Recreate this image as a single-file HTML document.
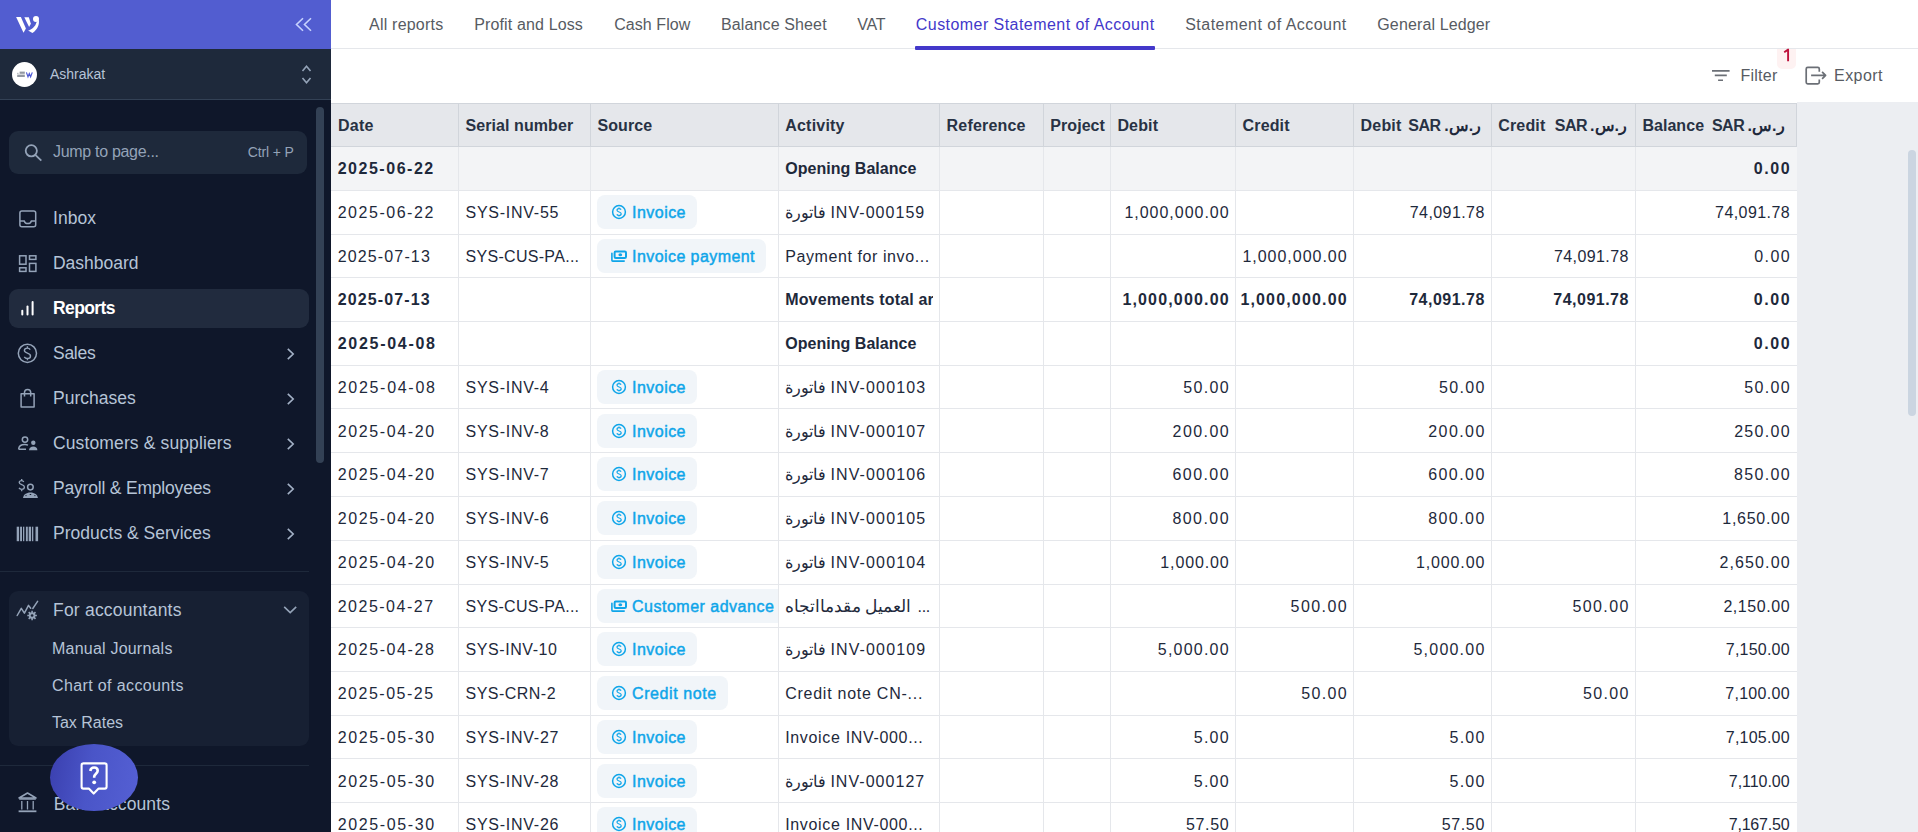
<!DOCTYPE html>
<html><head><meta charset="utf-8"><title>Customer Statement of Account</title>
<style>
html,body{margin:0;padding:0;width:1918px;height:832px;overflow:hidden;background:#fff}
body{position:relative;font-family:"Liberation Sans",sans-serif}
.b{position:absolute;box-sizing:border-box}
.t{position:absolute;white-space:pre;font-family:"Liberation Sans",sans-serif}
.clip{position:absolute;overflow:hidden}
</style></head><body>
<div class="b" style="left:0px;top:0px;width:331px;height:832px;background:#0f172a"></div><div class="b" style="left:0px;top:0px;width:331px;height:49px;background:#525dd0"></div><div class="b" style="left:0px;top:49px;width:331px;height:50px;background:#1e293b"></div><div class="b" style="left:0px;top:99px;width:331px;height:1px;background:#334155"></div><svg class="b" style="left:10px;top:10px;" width="36" height="30" viewBox="0 0 36 30"><g fill="#fff"><path d="M6.1 7 L10.9 7 L15.9 18.4 L13.5 22.8 Z"/><path d="M14.3 7.2 L18.8 7.2 L20.9 13.8 L19.1 17 Z"/><circle cx="26" cy="8.9" r="3"/><path d="M28.8 9.8 C29.6 14.2, 27.8 19.6, 22.4 23.1 L18.1 20.6 C21.6 19.4, 25.4 16.6, 26.4 12.4 Z"/></g></svg><svg class="b" style="left:290px;top:12px;" width="28" height="26" viewBox="0 0 28 26"><path d="M13 6.2 L6.5 12.5 L13 18.8 M21 6.2 L14.5 12.5 L21 18.8" fill="none" stroke="#c7d2fe" stroke-width="1.6"/></svg><div class="b" style="left:12px;top:62px;width:25px;height:25px;border-radius:50%;background:#fff"></div><svg class="b" style="left:12px;top:62px;" width="25" height="25" viewBox="0 0 25 25"><g fill="#4b5563" opacity="0.6"><rect x="7.6" y="9.6" width="5.2" height="2.2"/><rect x="5" y="10.9" width="1.6" height="0.7"/><rect x="5.2" y="12.6" width="7.6" height="2.4"/></g><path d="M14.4 10.4 L16 14.8 L17.3 11.6 L18.6 14.8 L20.3 10.4" fill="none" stroke="#4f5bd5" stroke-width="1.2"/></svg><div class="t" style="left:50px;top:65.15px;font-size:14px;line-height:18px;color:#b6c4d7;font-weight:400;letter-spacing:-0.019px;">Ashrakat</div><svg class="b" style="left:298px;top:62px;" width="18" height="26" viewBox="0 0 18 26"><path d="M4.5 9 L8.5 4.2 L12.5 9 M4.5 16 L8.5 20.8 L12.5 16" fill="none" stroke="#94a3b8" stroke-width="1.6"/></svg><div class="b" style="left:316px;top:107px;width:8px;height:356px;background:#334155;border-radius:4px"></div><div class="b" style="left:9px;top:131px;width:298px;height:43px;background:#1e293b;border-radius:9px"></div><svg class="b" style="left:20px;top:140px;" width="26" height="26" viewBox="0 0 26 26"><circle cx="11.3" cy="10.8" r="5.6" fill="none" stroke="#94a3b8" stroke-width="1.8"/><path d="M15.3 14.8 L21.3 20.6" stroke="#94a3b8" stroke-width="1.8"/></svg><div class="t" style="left:53px;top:141.46px;font-size:16px;line-height:21px;color:#94a3b8;font-weight:400;letter-spacing:-0.306px;">Jump to page...</div><div class="t" style="left:247.7px;top:142.95px;font-size:14px;line-height:18px;color:#94a3b8;font-weight:400;letter-spacing:-0.122px;">Ctrl + P</div><div class="b" style="left:9px;top:289px;width:300px;height:39px;background:#212b3e;border-radius:9px"></div><div class="t" style="left:53px;top:207.04px;font-size:17.5px;line-height:23px;color:#b6c4d7;font-weight:400;letter-spacing:0.017px;">Inbox</div><div class="t" style="left:53px;top:252.04px;font-size:17.5px;line-height:23px;color:#b6c4d7;font-weight:400;letter-spacing:-0.025px;">Dashboard</div><div class="t" style="left:53px;top:297.04px;font-size:17.5px;line-height:23px;color:#ffffff;font-weight:700;letter-spacing:-0.604px;">Reports</div><div class="t" style="left:53px;top:342.04px;font-size:17.5px;line-height:23px;color:#b6c4d7;font-weight:400;letter-spacing:-0.276px;">Sales</div><svg class="b" style="left:281px;top:345.7px;" width="20" height="16" viewBox="0 0 20 16"><path d="M6.8 2.8 L12.2 8 L6.8 13.2" fill="none" stroke="#a3b1c6" stroke-width="1.6"/></svg><div class="t" style="left:53px;top:387.24px;font-size:17.5px;line-height:23px;color:#b6c4d7;font-weight:400;letter-spacing:0.012px;">Purchases</div><svg class="b" style="left:281px;top:390.9px;" width="20" height="16" viewBox="0 0 20 16"><path d="M6.8 2.8 L12.2 8 L6.8 13.2" fill="none" stroke="#a3b1c6" stroke-width="1.6"/></svg><div class="t" style="left:53px;top:432.24px;font-size:17.5px;line-height:23px;color:#b6c4d7;font-weight:400;letter-spacing:0.126px;">Customers &amp; suppliers</div><svg class="b" style="left:281px;top:435.9px;" width="20" height="16" viewBox="0 0 20 16"><path d="M6.8 2.8 L12.2 8 L6.8 13.2" fill="none" stroke="#a3b1c6" stroke-width="1.6"/></svg><div class="t" style="left:53px;top:477.24px;font-size:17.5px;line-height:23px;color:#b6c4d7;font-weight:400;letter-spacing:-0.193px;">Payroll &amp; Employees</div><svg class="b" style="left:281px;top:480.9px;" width="20" height="16" viewBox="0 0 20 16"><path d="M6.8 2.8 L12.2 8 L6.8 13.2" fill="none" stroke="#a3b1c6" stroke-width="1.6"/></svg><div class="t" style="left:53px;top:522.24px;font-size:17.5px;line-height:23px;color:#b6c4d7;font-weight:400;letter-spacing:0.013px;">Products &amp; Services</div><svg class="b" style="left:281px;top:525.9px;" width="20" height="16" viewBox="0 0 20 16"><path d="M6.8 2.8 L12.2 8 L6.8 13.2" fill="none" stroke="#a3b1c6" stroke-width="1.6"/></svg><svg class="b" style="left:14px;top:205px;" width="28" height="28" viewBox="0 0 28 28"><rect x="5.9" y="5.9" width="15.8" height="15.8" rx="2" fill="none" stroke="#94a3b8" stroke-width="1.5"/><path d="M5.9 15.9 H10.2 C10.8 17.6, 12 18.6, 13.8 18.6 C15.6 18.6, 16.8 17.6, 17.4 15.9 H21.7" fill="none" stroke="#94a3b8" stroke-width="1.5"/></svg><svg class="b" style="left:14px;top:250px;" width="28" height="28" viewBox="0 0 28 28"><g fill="none" stroke="#94a3b8" stroke-width="1.5"><rect x="5.6" y="5.8" width="6.4" height="8.4"/><rect x="5.6" y="17.8" width="6.4" height="3.6"/><rect x="15.5" y="5.8" width="6.4" height="3.6"/><rect x="15.5" y="13.4" width="6.4" height="8"/></g></svg><svg class="b" style="left:14px;top:296px;" width="28" height="24" viewBox="0 0 28 24"><g stroke="#fff" stroke-width="2" stroke-linecap="round"><path d="M8.3 14.8 V18.6"/><path d="M13.5 10.6 V18.6"/><path d="M18.6 6 V18.6"/></g></svg><svg class="b" style="left:14px;top:340px;" width="28" height="28" viewBox="0 0 28 28"><circle cx="13.4" cy="13.3" r="9.1" fill="none" stroke="#94a3b8" stroke-width="1.5"/><path d="M16.2 9.6 C15.6 8.6, 14.6 8.1, 13.4 8.1 C11.6 8.1, 10.4 9.1, 10.4 10.6 C10.4 13.8, 16.5 12.6, 16.5 15.9 C16.5 17.5, 15.1 18.5, 13.4 18.5 C12 18.5, 10.9 17.9, 10.3 16.9 M13.4 6.3 V8.1 M13.4 18.5 V20.3" fill="none" stroke="#94a3b8" stroke-width="1.4"/></svg><svg class="b" style="left:14px;top:385px;" width="28" height="28" viewBox="0 0 28 28"><path d="M7.1 8.8 H20.1 V22.1 H7.1 Z" fill="none" stroke="#94a3b8" stroke-width="1.5" stroke-linejoin="round"/><path d="M10.5 11.5 V7.6 C10.5 5.6, 11.9 4.4, 13.6 4.4 C15.3 4.4, 16.7 5.6, 16.7 7.6 V11.5" fill="none" stroke="#94a3b8" stroke-width="1.5"/></svg><svg class="b" style="left:14px;top:432px;" width="28" height="24" viewBox="0 0 28 24"><circle cx="11" cy="7.6" r="2.7" fill="none" stroke="#94a3b8" stroke-width="1.5"/><path d="M4.6 17.3 C4.8 14.2, 7.5 12.6, 11 12.6 C12.2 12.6, 13.2 12.8, 14 13.1 M4.6 17.3 H12" fill="none" stroke="#94a3b8" stroke-width="1.5"/><circle cx="19.3" cy="10.8" r="2.2" fill="#94a3b8"/><path d="M15 18.3 C15.3 15.5, 17 14.4, 19.3 14.4 C21.6 14.4, 23.3 15.5, 23.4 18.3 Z" fill="#94a3b8"/></svg><svg class="b" style="left:14px;top:475px;" width="28" height="28" viewBox="0 0 28 28"><path d="M9.8 6.8 C9.3 6, 8.5 5.6, 7.6 5.6 C6.2 5.6, 5.2 6.4, 5.2 7.5 C5.2 10.2, 10.4 9.2, 10.4 12.1 C10.4 13.4, 9.2 14.3, 7.7 14.3 C6.5 14.3, 5.5 13.8, 5 12.9 M7.7 4 V5.6 M7.7 14.3 V16.3" fill="none" stroke="#94a3b8" stroke-width="1.3"/><circle cx="16.4" cy="12.1" r="2.8" fill="none" stroke="#94a3b8" stroke-width="1.5"/><path d="M9 23 C9.3 19.6, 12.3 17.4, 16.4 17.4 C20.5 17.4, 23.6 19.6, 23.9 23 Z" fill="#94a3b8"/><path d="M11.5 20.6 H12.5 M15.7 19.5 H17.2 M20.4 20.6 H21.4" stroke="#0f172a" stroke-width="1"/></svg><svg class="b" style="left:14px;top:522px;" width="28" height="24" viewBox="0 0 28 24"><g fill="#94a3b8"><rect x="2.7" y="4.7" width="2.4" height="14.5"/><rect x="6.1" y="4.7" width="1.9" height="14.5"/><rect x="9" y="4.7" width="1.3" height="14.5"/><rect x="11.9" y="4.7" width="1.9" height="14.5"/><rect x="14.7" y="4.7" width="2.4" height="14.5"/><rect x="18" y="4.7" width="1.3" height="14.5"/><rect x="21.5" y="4.7" width="2.6" height="14.5"/></g></svg><div class="b" style="left:0px;top:571px;width:309px;height:1px;background:#1e293b"></div><div class="b" style="left:9px;top:591px;width:300px;height:155px;background:#172033;border-radius:9px"></div><div class="t" style="left:53px;top:599.04px;font-size:17.5px;line-height:23px;color:#b6c4d7;font-weight:400;letter-spacing:0.208px;">For accountants</div><svg class="b" style="left:10px;top:590px;" width="40" height="40" viewBox="0 0 40 40"><path d="M7.2 25.5 L11.3 18.3 L14.4 23.1 L18.5 15.4 L20.7 18.3 M22.8 18.5 L27.6 11.3" fill="none" stroke="#94a3b8" stroke-width="1.5" stroke-linecap="round" stroke-linejoin="round"/><g transform="translate(22.1 25.5)"><circle r="3.3" fill="#94a3b8"/><g stroke="#94a3b8" stroke-width="1.6"><path d="M0 -4.8 V4.8 M-4.8 0 H4.8 M-3.4 -3.4 L3.4 3.4 M-3.4 3.4 L3.4 -3.4"/></g><circle r="1.3" fill="#172033"/></g></svg><svg class="b" style="left:278px;top:600px;" width="24" height="20" viewBox="0 0 24 20"><path d="M6.2 6.8 L12.2 12.6 L18.2 6.8" fill="none" stroke="#94a3b8" stroke-width="1.6"/></svg><div class="t" style="left:52px;top:638.16px;font-size:16px;line-height:21px;color:#b6c4d7;font-weight:400;letter-spacing:0.213px;">Manual Journals</div><div class="t" style="left:52px;top:675.36px;font-size:16px;line-height:21px;color:#b6c4d7;font-weight:400;letter-spacing:0.376px;">Chart of accounts</div><div class="t" style="left:52px;top:712.26px;font-size:16px;line-height:21px;color:#b6c4d7;font-weight:400;letter-spacing:-0.016px;">Tax Rates</div><div class="b" style="left:0px;top:765px;width:309px;height:1px;background:#1e293b"></div><svg class="b" style="left:14px;top:788px;" width="28" height="28" viewBox="0 0 28 28"><path d="M5 10 L13.5 5 L22 10 Z" fill="none" stroke="#94a3b8" stroke-width="1.5" stroke-linejoin="round"/><path d="M5.2 11 H21.8" stroke="#94a3b8" stroke-width="1.5"/><path d="M7.8 13 V21.4 M13.5 13 V21.4 M19.2 13 V21.4" stroke="#94a3b8" stroke-width="1.3"/><path d="M4.6 23.3 H22.4" stroke="#94a3b8" stroke-width="1.8"/></svg><div class="t" style="left:53.75px;top:792.64px;font-size:17.5px;line-height:23px;color:#b6c4d7;font-weight:400;letter-spacing:0.116px;">Bank accounts</div><div class="b" style="left:50px;top:744px;width:88px;height:67px;border-radius:50%;background:linear-gradient(100deg,#3a3fae 0%,#4a55c8 45%,#5560d4 100%)"></div><svg class="b" style="left:76px;top:758px;" width="36" height="40" viewBox="0 0 36 40"><path d="M5.6 7.2 Q5.6 5.4 7.4 5.4 H28.8 Q30.6 5.4 30.6 7.2 V28.8 Q30.6 30.6 28.8 30.6 H22.6 L17.7 35.6 L12.8 30.6 H7.4 Q5.6 30.6 5.6 28.8 Z" fill="none" stroke="#fff" stroke-width="2.1" stroke-linejoin="round"/><path d="M14.3 13 C14.6 10.7, 16.1 9.5, 18.1 9.5 C20.2 9.5, 21.7 10.9, 21.7 12.8 C21.7 15.5, 18.2 15.9, 18.2 18.8 V19.8" fill="none" stroke="#fff" stroke-width="2.6"/><circle cx="18.2" cy="24.3" r="1.9" fill="#fff"/></svg><div class="b" style="left:331px;top:0px;width:1587px;height:832px;background:#fff"></div><div class="b" style="left:331px;top:48px;width:1587px;height:1px;background:#e5e7eb"></div><div class="t" style="left:369px;top:13.76px;font-size:16px;line-height:21px;color:#575b62;font-weight:400;letter-spacing:0.215px;">All reports</div><div class="t" style="left:474.2px;top:13.76px;font-size:16px;line-height:21px;color:#575b62;font-weight:400;letter-spacing:0.138px;">Profit and Loss</div><div class="t" style="left:614.2px;top:13.76px;font-size:16px;line-height:21px;color:#575b62;font-weight:400;letter-spacing:0.069px;">Cash Flow</div><div class="t" style="left:721px;top:13.76px;font-size:16px;line-height:21px;color:#575b62;font-weight:400;letter-spacing:0.125px;">Balance Sheet</div><div class="t" style="left:857.3px;top:13.76px;font-size:16px;line-height:21px;color:#575b62;font-weight:400;letter-spacing:-0.283px;">VAT</div><div class="t" style="left:915.8px;top:13.76px;font-size:16px;line-height:21px;color:#4338ca;font-weight:400;letter-spacing:0.445px;">Customer Statement of Account</div><div class="t" style="left:1185.2px;top:13.76px;font-size:16px;line-height:21px;color:#575b62;font-weight:400;letter-spacing:0.475px;">Statement of Account</div><div class="t" style="left:1377.3px;top:13.76px;font-size:16px;line-height:21px;color:#575b62;font-weight:400;letter-spacing:0.129px;">General Ledger</div><div class="b" style="left:915px;top:46px;width:240px;height:4px;background:#4338ca;border-radius:1px"></div><svg class="b" style="left:1706px;top:62px;" width="30" height="26" viewBox="0 0 30 26"><path d="M6 8.9 H23.6 M8.8 13.4 H20.8 M12.1 18.3 H17" stroke="#6b6f76" stroke-width="1.6"/></svg><div class="t" style="left:1740.4px;top:65.06px;font-size:16px;line-height:21px;color:#575b62;font-weight:400;letter-spacing:0.273px;">Filter</div><div class="b" style="left:1777px;top:49px;width:19px;height:20px;background:#fef2f2;border-radius:0 0 5px 5px"></div><svg class="b" style="left:1780px;top:46px;" width="14" height="18" viewBox="0 0 14 18"><path d="M4.2 6.2 L8.1 3.6 V15.3" fill="none" stroke="#be123c" stroke-width="1.9" stroke-linejoin="round"/></svg><svg class="b" style="left:1800px;top:60px;" width="32" height="30" viewBox="0 0 32 30"><path d="M19.3 11.8 V8.9 Q19.3 7.4 17.8 7.4 H7.7 Q6.2 7.4 6.2 8.9 V22.3 Q6.2 23.8 7.7 23.8 H17.8 Q19.3 23.8 19.3 22.3 V19.4" fill="none" stroke="#6b6f76" stroke-width="1.7"/><path d="M11.1 15.3 H25.4 M22.1 11.8 L25.6 15.3 L22.1 18.8" fill="none" stroke="#6b6f76" stroke-width="1.7" stroke-linejoin="round"/></svg><div class="t" style="left:1834px;top:65.06px;font-size:16px;line-height:21px;color:#575b62;font-weight:400;letter-spacing:0.458px;">Export</div><div class="b" style="left:1797px;top:102px;width:121px;height:730px;background:#eceef2"></div><div class="b" style="left:1908px;top:150px;width:8px;height:266px;background:#cbd5e1;border-radius:4px"></div><div class="b" style="left:331px;top:103px;width:1466px;height:44px;background:#e5e7eb"></div><div class="b" style="left:331px;top:103px;width:1466px;height:1px;background:#d1d5db"></div><div class="b" style="left:331px;top:146px;width:1466px;height:1px;background:#d1d5db"></div><div class="b" style="left:458px;top:103px;width:1px;height:44px;background:#d1d5db"></div><div class="b" style="left:590px;top:103px;width:1px;height:44px;background:#d1d5db"></div><div class="b" style="left:778px;top:103px;width:1px;height:44px;background:#d1d5db"></div><div class="b" style="left:939px;top:103px;width:1px;height:44px;background:#d1d5db"></div><div class="b" style="left:1043px;top:103px;width:1px;height:44px;background:#d1d5db"></div><div class="b" style="left:1110px;top:103px;width:1px;height:44px;background:#d1d5db"></div><div class="b" style="left:1235px;top:103px;width:1px;height:44px;background:#d1d5db"></div><div class="b" style="left:1353px;top:103px;width:1px;height:44px;background:#d1d5db"></div><div class="b" style="left:1491px;top:103px;width:1px;height:44px;background:#d1d5db"></div><div class="b" style="left:1635px;top:103px;width:1px;height:44px;background:#d1d5db"></div><div class="b" style="left:1796px;top:103px;width:1px;height:44px;background:#d1d5db"></div><div class="b" style="left:331px;top:147px;width:1466px;height:685px;background:#fff"></div><div class="b" style="left:331px;top:147px;width:1466px;height:43px;background:#f3f4f6"></div><div class="b" style="left:331px;top:190px;width:1466px;height:1px;background:#e5e7eb"></div><div class="b" style="left:331px;top:234px;width:1466px;height:1px;background:#e5e7eb"></div><div class="b" style="left:331px;top:277px;width:1466px;height:1px;background:#e5e7eb"></div><div class="b" style="left:331px;top:321px;width:1466px;height:1px;background:#e5e7eb"></div><div class="b" style="left:331px;top:365px;width:1466px;height:1px;background:#e5e7eb"></div><div class="b" style="left:331px;top:408px;width:1466px;height:1px;background:#e5e7eb"></div><div class="b" style="left:331px;top:452px;width:1466px;height:1px;background:#e5e7eb"></div><div class="b" style="left:331px;top:496px;width:1466px;height:1px;background:#e5e7eb"></div><div class="b" style="left:331px;top:540px;width:1466px;height:1px;background:#e5e7eb"></div><div class="b" style="left:331px;top:584px;width:1466px;height:1px;background:#e5e7eb"></div><div class="b" style="left:331px;top:627px;width:1466px;height:1px;background:#e5e7eb"></div><div class="b" style="left:331px;top:671px;width:1466px;height:1px;background:#e5e7eb"></div><div class="b" style="left:331px;top:715px;width:1466px;height:1px;background:#e5e7eb"></div><div class="b" style="left:331px;top:758px;width:1466px;height:1px;background:#e5e7eb"></div><div class="b" style="left:331px;top:802px;width:1466px;height:1px;background:#e5e7eb"></div><div class="b" style="left:331px;top:846px;width:1466px;height:1px;background:#e5e7eb"></div><div class="b" style="left:458px;top:147px;width:1px;height:685px;background:#e5e7eb"></div><div class="b" style="left:590px;top:147px;width:1px;height:685px;background:#e5e7eb"></div><div class="b" style="left:778px;top:147px;width:1px;height:685px;background:#e5e7eb"></div><div class="b" style="left:939px;top:147px;width:1px;height:685px;background:#e5e7eb"></div><div class="b" style="left:1043px;top:147px;width:1px;height:685px;background:#e5e7eb"></div><div class="b" style="left:1110px;top:147px;width:1px;height:685px;background:#e5e7eb"></div><div class="b" style="left:1235px;top:147px;width:1px;height:685px;background:#e5e7eb"></div><div class="b" style="left:1353px;top:147px;width:1px;height:685px;background:#e5e7eb"></div><div class="b" style="left:1491px;top:147px;width:1px;height:685px;background:#e5e7eb"></div><div class="b" style="left:1635px;top:147px;width:1px;height:685px;background:#e5e7eb"></div><div class="t" style="left:338px;top:114.86px;font-size:16px;line-height:21px;color:#283244;font-weight:700;letter-spacing:0.254px;">Date</div><div class="t" style="left:465.5px;top:114.86px;font-size:16px;line-height:21px;color:#283244;font-weight:700;letter-spacing:0.082px;">Serial number</div><div class="t" style="left:597.5px;top:114.86px;font-size:16px;line-height:21px;color:#283244;font-weight:700;letter-spacing:0.081px;">Source</div><div class="t" style="left:785.2px;top:114.86px;font-size:16px;line-height:21px;color:#283244;font-weight:700;letter-spacing:0.219px;">Activity</div><div class="t" style="left:946.6px;top:114.86px;font-size:16px;line-height:21px;color:#283244;font-weight:700;letter-spacing:0.184px;">Reference</div><div class="t" style="left:1050.3px;top:114.86px;font-size:16px;line-height:21px;color:#283244;font-weight:700;letter-spacing:0.062px;">Project</div><div class="t" style="left:1117.4px;top:114.86px;font-size:16px;line-height:21px;color:#283244;font-weight:700;letter-spacing:0.169px;">Debit</div><div class="t" style="left:1242.6px;top:114.86px;font-size:16px;line-height:21px;color:#283244;font-weight:700;letter-spacing:0.141px;">Credit</div><div class="t" style="left:1360.6px;top:114.86px;font-size:16px;line-height:21px;color:#283244;font-weight:700;letter-spacing:0.169px;">Debit</div><div class="t" style="left:1498.3px;top:114.86px;font-size:16px;line-height:21px;color:#283244;font-weight:700;letter-spacing:0.141px;">Credit</div><div class="t" style="left:1642.4px;top:114.86px;font-size:16px;line-height:21px;color:#283244;font-weight:700;letter-spacing:0.045px;">Balance</div><div class="t" style="left:1408.2px;top:114.86px;font-size:16px;line-height:21px;color:#283244;font-weight:700;letter-spacing:-0.484px;">SAR</div><div class="t" style="right:calc(436.79999999999995px - 0.000px);top:114.86px;font-size:16px;line-height:21px;color:#1e293b;font-weight:700;letter-spacing:0.000px;direction:rtl;unicode-bidi:isolate">ر.س.</div><div class="t" style="left:1554.7px;top:114.86px;font-size:16px;line-height:21px;color:#283244;font-weight:700;letter-spacing:-0.484px;">SAR</div><div class="t" style="right:calc(291px - 0.000px);top:114.86px;font-size:16px;line-height:21px;color:#1e293b;font-weight:700;letter-spacing:0.000px;direction:rtl;unicode-bidi:isolate">ر.س.</div><div class="t" style="left:1711.9px;top:114.86px;font-size:16px;line-height:21px;color:#283244;font-weight:700;letter-spacing:-0.484px;">SAR</div><div class="t" style="right:calc(133.5px - 0.000px);top:114.86px;font-size:16px;line-height:21px;color:#1e293b;font-weight:700;letter-spacing:0.000px;direction:rtl;unicode-bidi:isolate">ر.س.</div><div class="t" style="left:337.7px;top:158.13px;font-size:16px;line-height:21px;color:#1e293b;font-weight:700;letter-spacing:1.522px;">2025-06-22</div><div class="clip" style="left:779.2px;top:146.00px;width:153.9px;height:43.75px"><div class="t" style="left:6px;top:12.13px;font-size:16px;line-height:21px;color:#1e293b;font-weight:700;letter-spacing:0.035px;">Opening Balance</div></div><div class="t" style="right:calc(128.4000000000001px - 1.584px);top:158.13px;font-size:16px;line-height:21px;color:#1e293b;font-weight:700;letter-spacing:1.584px;">0.00</div><div class="t" style="left:337.7px;top:201.88px;font-size:16px;line-height:21px;color:#1e293b;font-weight:400;letter-spacing:1.529px;">2025-06-22</div><div class="t" style="left:465.5px;top:201.88px;font-size:16px;line-height:21px;color:#1e293b;font-weight:400;letter-spacing:0.743px;">SYS-INV-55</div><div class="clip" style="left:597.1px;top:194.75px;width:181.1px;height:34px"><div class="b" style="left:0;top:0;width:100.0px;height:34px;background:#f1f5f9;border-radius:8px"></div></div><svg class="b" style="left:608.7px;top:201.825px" width="20" height="20" viewBox="0 0 20 20"><circle cx="10" cy="10" r="6.4" fill="none" stroke="#0ea5e9" stroke-width="1.5"/><path d="M12.1 7.6 C11.7 7, 11 6.6, 10 6.6 C8.8 6.6, 8 7.3, 8 8.3 C8 10.5, 12.2 9.6, 12.2 11.8 C12.2 12.9, 11.2 13.5, 10 13.5 C9 13.5, 8.2 13.1, 7.8 12.4 M10 5.4 V6.6 M10 13.5 V14.6" fill="none" stroke="#0ea5e9" stroke-width="1.2"/></svg><div class="t" style="left:632px;top:201.88px;font-size:16px;line-height:21px;color:#0ea5e9;font-weight:400;letter-spacing:0.471px;-webkit-text-stroke:0.45px #0ea5e9">Invoice</div><div class="t" style="right:calc(1092px - 0.000px);top:201.88px;font-size:16px;line-height:21px;color:#1e293b;font-weight:400;letter-spacing:0.000px;direction:rtl;unicode-bidi:isolate">فاتورة</div><div class="t" style="left:830.4px;top:201.88px;font-size:16px;line-height:21px;color:#1e293b;font-weight:400;letter-spacing:1.038px;">INV-000159</div><div class="t" style="right:calc(689.4000000000001px - 0.976px);top:201.88px;font-size:16px;line-height:21px;color:#1e293b;font-weight:400;letter-spacing:0.976px;">1,000,000.00</div><div class="t" style="right:calc(433.70000000000005px - 0.415px);top:201.88px;font-size:16px;line-height:21px;color:#1e293b;font-weight:400;letter-spacing:0.415px;">74,091.78</div><div class="t" style="right:calc(128.4000000000001px - 0.415px);top:201.88px;font-size:16px;line-height:21px;color:#1e293b;font-weight:400;letter-spacing:0.415px;">74,091.78</div><div class="t" style="left:337.7px;top:245.63px;font-size:16px;line-height:21px;color:#1e293b;font-weight:400;letter-spacing:1.142px;">2025-07-13</div><div class="t" style="left:465.5px;top:245.63px;font-size:16px;line-height:21px;color:#1e293b;font-weight:400;letter-spacing:0.302px;">SYS-CUS-PA...</div><div class="clip" style="left:597.1px;top:238.50px;width:181.1px;height:34px"><div class="b" style="left:0;top:0;width:169.0px;height:34px;background:#f1f5f9;border-radius:8px"></div></div><svg class="b" style="left:608.8px;top:245.575px" width="20" height="20" viewBox="0 0 20 20"><rect x="5.6" y="5.6" width="11.4" height="6.4" rx="1.2" fill="none" stroke="#0ea5e9" stroke-width="2"/><ellipse cx="11.3" cy="8.8" rx="1.9" ry="1.5" fill="#0ea5e9"/><path d="M2.9 7.2 V14.3 Q2.9 15.1 3.7 15.1 H15.2" fill="none" stroke="#0ea5e9" stroke-width="1.6" stroke-linecap="round"/></svg><div class="t" style="left:632px;top:245.63px;font-size:16px;line-height:21px;color:#0ea5e9;font-weight:400;letter-spacing:0.432px;-webkit-text-stroke:0.45px #0ea5e9">Invoice payment</div><div class="t" style="left:785.2px;top:245.63px;font-size:16px;line-height:21px;color:#1e293b;font-weight:400;letter-spacing:0.590px;">Payment for invo...</div><div class="t" style="right:calc(571.4000000000001px - 0.976px);top:245.63px;font-size:16px;line-height:21px;color:#1e293b;font-weight:400;letter-spacing:0.976px;">1,000,000.00</div><div class="t" style="right:calc(289.5999999999999px - 0.415px);top:245.63px;font-size:16px;line-height:21px;color:#1e293b;font-weight:400;letter-spacing:0.415px;">74,091.78</div><div class="t" style="right:calc(128.4000000000001px - 1.390px);top:245.63px;font-size:16px;line-height:21px;color:#1e293b;font-weight:400;letter-spacing:1.390px;">0.00</div><div class="t" style="left:337.7px;top:289.38px;font-size:16px;line-height:21px;color:#1e293b;font-weight:700;letter-spacing:1.132px;">2025-07-13</div><div class="clip" style="left:779.2px;top:277.25px;width:153.9px;height:43.75px"><div class="t" style="left:6px;top:12.13px;font-size:16px;line-height:21px;color:#1e293b;font-weight:700;letter-spacing:0.158px;">Movements total ar</div></div><div class="t" style="right:calc(689.4000000000001px - 1.163px);top:289.38px;font-size:16px;line-height:21px;color:#1e293b;font-weight:700;letter-spacing:1.163px;">1,000,000.00</div><div class="t" style="right:calc(571.4000000000001px - 1.163px);top:289.38px;font-size:16px;line-height:21px;color:#1e293b;font-weight:700;letter-spacing:1.163px;">1,000,000.00</div><div class="t" style="right:calc(433.70000000000005px - 0.491px);top:289.38px;font-size:16px;line-height:21px;color:#1e293b;font-weight:700;letter-spacing:0.491px;">74,091.78</div><div class="t" style="right:calc(289.5999999999999px - 0.491px);top:289.38px;font-size:16px;line-height:21px;color:#1e293b;font-weight:700;letter-spacing:0.491px;">74,091.78</div><div class="t" style="right:calc(128.4000000000001px - 1.584px);top:289.38px;font-size:16px;line-height:21px;color:#1e293b;font-weight:700;letter-spacing:1.584px;">0.00</div><div class="t" style="left:337.7px;top:333.13px;font-size:16px;line-height:21px;color:#1e293b;font-weight:700;letter-spacing:1.721px;">2025-04-08</div><div class="clip" style="left:779.2px;top:321.00px;width:153.9px;height:43.75px"><div class="t" style="left:6px;top:12.13px;font-size:16px;line-height:21px;color:#1e293b;font-weight:700;letter-spacing:0.035px;">Opening Balance</div></div><div class="t" style="right:calc(128.4000000000001px - 1.584px);top:333.13px;font-size:16px;line-height:21px;color:#1e293b;font-weight:700;letter-spacing:1.584px;">0.00</div><div class="t" style="left:337.7px;top:376.88px;font-size:16px;line-height:21px;color:#1e293b;font-weight:400;letter-spacing:1.708px;">2025-04-08</div><div class="t" style="left:465.5px;top:376.88px;font-size:16px;line-height:21px;color:#1e293b;font-weight:400;letter-spacing:0.721px;">SYS-INV-4</div><div class="clip" style="left:597.1px;top:369.75px;width:181.1px;height:34px"><div class="b" style="left:0;top:0;width:100.0px;height:34px;background:#f1f5f9;border-radius:8px"></div></div><svg class="b" style="left:608.7px;top:376.825px" width="20" height="20" viewBox="0 0 20 20"><circle cx="10" cy="10" r="6.4" fill="none" stroke="#0ea5e9" stroke-width="1.5"/><path d="M12.1 7.6 C11.7 7, 11 6.6, 10 6.6 C8.8 6.6, 8 7.3, 8 8.3 C8 10.5, 12.2 9.6, 12.2 11.8 C12.2 12.9, 11.2 13.5, 10 13.5 C9 13.5, 8.2 13.1, 7.8 12.4 M10 5.4 V6.6 M10 13.5 V14.6" fill="none" stroke="#0ea5e9" stroke-width="1.2"/></svg><div class="t" style="left:632px;top:376.88px;font-size:16px;line-height:21px;color:#0ea5e9;font-weight:400;letter-spacing:0.471px;-webkit-text-stroke:0.45px #0ea5e9">Invoice</div><div class="t" style="right:calc(1092px - 0.000px);top:376.88px;font-size:16px;line-height:21px;color:#1e293b;font-weight:400;letter-spacing:0.000px;direction:rtl;unicode-bidi:isolate">فاتورة</div><div class="t" style="left:830.4px;top:376.88px;font-size:16px;line-height:21px;color:#1e293b;font-weight:400;letter-spacing:1.143px;">INV-000103</div><div class="t" style="right:calc(689.4000000000001px - 1.336px);top:376.88px;font-size:16px;line-height:21px;color:#1e293b;font-weight:400;letter-spacing:1.336px;">50.00</div><div class="t" style="right:calc(433.70000000000005px - 1.336px);top:376.88px;font-size:16px;line-height:21px;color:#1e293b;font-weight:400;letter-spacing:1.336px;">50.00</div><div class="t" style="right:calc(128.4000000000001px - 1.336px);top:376.88px;font-size:16px;line-height:21px;color:#1e293b;font-weight:400;letter-spacing:1.336px;">50.00</div><div class="t" style="left:337.7px;top:420.63px;font-size:16px;line-height:21px;color:#1e293b;font-weight:400;letter-spacing:1.637px;">2025-04-20</div><div class="t" style="left:465.5px;top:420.63px;font-size:16px;line-height:21px;color:#1e293b;font-weight:400;letter-spacing:0.721px;">SYS-INV-8</div><div class="clip" style="left:597.1px;top:413.50px;width:181.1px;height:34px"><div class="b" style="left:0;top:0;width:100.0px;height:34px;background:#f1f5f9;border-radius:8px"></div></div><svg class="b" style="left:608.7px;top:420.575px" width="20" height="20" viewBox="0 0 20 20"><circle cx="10" cy="10" r="6.4" fill="none" stroke="#0ea5e9" stroke-width="1.5"/><path d="M12.1 7.6 C11.7 7, 11 6.6, 10 6.6 C8.8 6.6, 8 7.3, 8 8.3 C8 10.5, 12.2 9.6, 12.2 11.8 C12.2 12.9, 11.2 13.5, 10 13.5 C9 13.5, 8.2 13.1, 7.8 12.4 M10 5.4 V6.6 M10 13.5 V14.6" fill="none" stroke="#0ea5e9" stroke-width="1.2"/></svg><div class="t" style="left:632px;top:420.63px;font-size:16px;line-height:21px;color:#0ea5e9;font-weight:400;letter-spacing:0.471px;-webkit-text-stroke:0.45px #0ea5e9">Invoice</div><div class="t" style="right:calc(1092px - 0.000px);top:420.63px;font-size:16px;line-height:21px;color:#1e293b;font-weight:400;letter-spacing:0.000px;direction:rtl;unicode-bidi:isolate">فاتورة</div><div class="t" style="left:830.4px;top:420.63px;font-size:16px;line-height:21px;color:#1e293b;font-weight:400;letter-spacing:1.143px;">INV-000107</div><div class="t" style="right:calc(689.4000000000001px - 1.420px);top:420.63px;font-size:16px;line-height:21px;color:#1e293b;font-weight:400;letter-spacing:1.420px;">200.00</div><div class="t" style="right:calc(433.70000000000005px - 1.420px);top:420.63px;font-size:16px;line-height:21px;color:#1e293b;font-weight:400;letter-spacing:1.420px;">200.00</div><div class="t" style="right:calc(128.4000000000001px - 1.305px);top:420.63px;font-size:16px;line-height:21px;color:#1e293b;font-weight:400;letter-spacing:1.305px;">250.00</div><div class="t" style="left:337.7px;top:464.38px;font-size:16px;line-height:21px;color:#1e293b;font-weight:400;letter-spacing:1.637px;">2025-04-20</div><div class="t" style="left:465.5px;top:464.38px;font-size:16px;line-height:21px;color:#1e293b;font-weight:400;letter-spacing:0.721px;">SYS-INV-7</div><div class="clip" style="left:597.1px;top:457.25px;width:181.1px;height:34px"><div class="b" style="left:0;top:0;width:100.0px;height:34px;background:#f1f5f9;border-radius:8px"></div></div><svg class="b" style="left:608.7px;top:464.325px" width="20" height="20" viewBox="0 0 20 20"><circle cx="10" cy="10" r="6.4" fill="none" stroke="#0ea5e9" stroke-width="1.5"/><path d="M12.1 7.6 C11.7 7, 11 6.6, 10 6.6 C8.8 6.6, 8 7.3, 8 8.3 C8 10.5, 12.2 9.6, 12.2 11.8 C12.2 12.9, 11.2 13.5, 10 13.5 C9 13.5, 8.2 13.1, 7.8 12.4 M10 5.4 V6.6 M10 13.5 V14.6" fill="none" stroke="#0ea5e9" stroke-width="1.2"/></svg><div class="t" style="left:632px;top:464.38px;font-size:16px;line-height:21px;color:#0ea5e9;font-weight:400;letter-spacing:0.471px;-webkit-text-stroke:0.45px #0ea5e9">Invoice</div><div class="t" style="right:calc(1092px - 0.000px);top:464.38px;font-size:16px;line-height:21px;color:#1e293b;font-weight:400;letter-spacing:0.000px;direction:rtl;unicode-bidi:isolate">فاتورة</div><div class="t" style="left:830.4px;top:464.38px;font-size:16px;line-height:21px;color:#1e293b;font-weight:400;letter-spacing:1.143px;">INV-000106</div><div class="t" style="right:calc(689.4000000000001px - 1.447px);top:464.38px;font-size:16px;line-height:21px;color:#1e293b;font-weight:400;letter-spacing:1.447px;">600.00</div><div class="t" style="right:calc(433.70000000000005px - 1.447px);top:464.38px;font-size:16px;line-height:21px;color:#1e293b;font-weight:400;letter-spacing:1.447px;">600.00</div><div class="t" style="right:calc(128.4000000000001px - 1.329px);top:464.38px;font-size:16px;line-height:21px;color:#1e293b;font-weight:400;letter-spacing:1.329px;">850.00</div><div class="t" style="left:337.7px;top:508.13px;font-size:16px;line-height:21px;color:#1e293b;font-weight:400;letter-spacing:1.637px;">2025-04-20</div><div class="t" style="left:465.5px;top:508.13px;font-size:16px;line-height:21px;color:#1e293b;font-weight:400;letter-spacing:0.721px;">SYS-INV-6</div><div class="clip" style="left:597.1px;top:501.00px;width:181.1px;height:34px"><div class="b" style="left:0;top:0;width:100.0px;height:34px;background:#f1f5f9;border-radius:8px"></div></div><svg class="b" style="left:608.7px;top:508.07500000000005px" width="20" height="20" viewBox="0 0 20 20"><circle cx="10" cy="10" r="6.4" fill="none" stroke="#0ea5e9" stroke-width="1.5"/><path d="M12.1 7.6 C11.7 7, 11 6.6, 10 6.6 C8.8 6.6, 8 7.3, 8 8.3 C8 10.5, 12.2 9.6, 12.2 11.8 C12.2 12.9, 11.2 13.5, 10 13.5 C9 13.5, 8.2 13.1, 7.8 12.4 M10 5.4 V6.6 M10 13.5 V14.6" fill="none" stroke="#0ea5e9" stroke-width="1.2"/></svg><div class="t" style="left:632px;top:508.13px;font-size:16px;line-height:21px;color:#0ea5e9;font-weight:400;letter-spacing:0.471px;-webkit-text-stroke:0.45px #0ea5e9">Invoice</div><div class="t" style="right:calc(1092px - 0.000px);top:508.13px;font-size:16px;line-height:21px;color:#1e293b;font-weight:400;letter-spacing:0.000px;direction:rtl;unicode-bidi:isolate">فاتورة</div><div class="t" style="left:830.4px;top:508.13px;font-size:16px;line-height:21px;color:#1e293b;font-weight:400;letter-spacing:1.143px;">INV-000105</div><div class="t" style="right:calc(689.4000000000001px - 1.444px);top:508.13px;font-size:16px;line-height:21px;color:#1e293b;font-weight:400;letter-spacing:1.444px;">800.00</div><div class="t" style="right:calc(433.70000000000005px - 1.444px);top:508.13px;font-size:16px;line-height:21px;color:#1e293b;font-weight:400;letter-spacing:1.444px;">800.00</div><div class="t" style="right:calc(128.4000000000001px - 0.711px);top:508.13px;font-size:16px;line-height:21px;color:#1e293b;font-weight:400;letter-spacing:0.711px;">1,650.00</div><div class="t" style="left:337.7px;top:551.88px;font-size:16px;line-height:21px;color:#1e293b;font-weight:400;letter-spacing:1.637px;">2025-04-20</div><div class="t" style="left:465.5px;top:551.88px;font-size:16px;line-height:21px;color:#1e293b;font-weight:400;letter-spacing:0.721px;">SYS-INV-5</div><div class="clip" style="left:597.1px;top:544.75px;width:181.1px;height:34px"><div class="b" style="left:0;top:0;width:100.0px;height:34px;background:#f1f5f9;border-radius:8px"></div></div><svg class="b" style="left:608.7px;top:551.825px" width="20" height="20" viewBox="0 0 20 20"><circle cx="10" cy="10" r="6.4" fill="none" stroke="#0ea5e9" stroke-width="1.5"/><path d="M12.1 7.6 C11.7 7, 11 6.6, 10 6.6 C8.8 6.6, 8 7.3, 8 8.3 C8 10.5, 12.2 9.6, 12.2 11.8 C12.2 12.9, 11.2 13.5, 10 13.5 C9 13.5, 8.2 13.1, 7.8 12.4 M10 5.4 V6.6 M10 13.5 V14.6" fill="none" stroke="#0ea5e9" stroke-width="1.2"/></svg><div class="t" style="left:632px;top:551.88px;font-size:16px;line-height:21px;color:#0ea5e9;font-weight:400;letter-spacing:0.471px;-webkit-text-stroke:0.45px #0ea5e9">Invoice</div><div class="t" style="right:calc(1092px - 0.000px);top:551.88px;font-size:16px;line-height:21px;color:#1e293b;font-weight:400;letter-spacing:0.000px;direction:rtl;unicode-bidi:isolate">فاتورة</div><div class="t" style="left:830.4px;top:551.88px;font-size:16px;line-height:21px;color:#1e293b;font-weight:400;letter-spacing:1.143px;">INV-000104</div><div class="t" style="right:calc(689.4000000000001px - 0.857px);top:551.88px;font-size:16px;line-height:21px;color:#1e293b;font-weight:400;letter-spacing:0.857px;">1,000.00</div><div class="t" style="right:calc(433.70000000000005px - 0.857px);top:551.88px;font-size:16px;line-height:21px;color:#1e293b;font-weight:400;letter-spacing:0.857px;">1,000.00</div><div class="t" style="right:calc(128.4000000000001px - 1.130px);top:551.88px;font-size:16px;line-height:21px;color:#1e293b;font-weight:400;letter-spacing:1.130px;">2,650.00</div><div class="t" style="left:337.7px;top:595.63px;font-size:16px;line-height:21px;color:#1e293b;font-weight:400;letter-spacing:1.500px;">2025-04-27</div><div class="t" style="left:465.5px;top:595.63px;font-size:16px;line-height:21px;color:#1e293b;font-weight:400;letter-spacing:0.302px;">SYS-CUS-PA...</div><div class="clip" style="left:597.1px;top:588.50px;width:181.1px;height:34px"><div class="b" style="left:0;top:0;width:188.3px;height:34px;background:#f1f5f9;border-radius:8px"></div></div><svg class="b" style="left:608.8px;top:595.575px" width="20" height="20" viewBox="0 0 20 20"><rect x="5.6" y="5.6" width="11.4" height="6.4" rx="1.2" fill="none" stroke="#0ea5e9" stroke-width="2"/><ellipse cx="11.3" cy="8.8" rx="1.9" ry="1.5" fill="#0ea5e9"/><path d="M2.9 7.2 V14.3 Q2.9 15.1 3.7 15.1 H15.2" fill="none" stroke="#0ea5e9" stroke-width="1.6" stroke-linecap="round"/></svg><div class="t" style="left:632px;top:595.63px;font-size:16px;line-height:21px;color:#0ea5e9;font-weight:400;letter-spacing:0.500px;-webkit-text-stroke:0.45px #0ea5e9">Customer advance</div><div class="t" style="right:calc(1006.5px - 0.000px);top:595.78px;font-size:17px;line-height:22px;color:#1e293b;font-weight:400;letter-spacing:0.000px;direction:rtl;unicode-bidi:isolate">العميل مقدمااتجاه</div><div class="t" style="left:917.5px;top:595.63px;font-size:16px;line-height:21px;color:#1e293b;font-weight:400;letter-spacing:-0.281px;">...</div><div class="t" style="right:calc(571.4000000000001px - 1.414px);top:595.63px;font-size:16px;line-height:21px;color:#1e293b;font-weight:400;letter-spacing:1.414px;">500.00</div><div class="t" style="right:calc(289.5999999999999px - 1.414px);top:595.63px;font-size:16px;line-height:21px;color:#1e293b;font-weight:400;letter-spacing:1.414px;">500.00</div><div class="t" style="right:calc(128.4000000000001px - 0.564px);top:595.63px;font-size:16px;line-height:21px;color:#1e293b;font-weight:400;letter-spacing:0.564px;">2,150.00</div><div class="t" style="left:337.7px;top:639.38px;font-size:16px;line-height:21px;color:#1e293b;font-weight:400;letter-spacing:1.587px;">2025-04-28</div><div class="t" style="left:465.5px;top:639.38px;font-size:16px;line-height:21px;color:#1e293b;font-weight:400;letter-spacing:0.583px;">SYS-INV-10</div><div class="clip" style="left:597.1px;top:632.25px;width:181.1px;height:34px"><div class="b" style="left:0;top:0;width:100.0px;height:34px;background:#f1f5f9;border-radius:8px"></div></div><svg class="b" style="left:608.7px;top:639.325px" width="20" height="20" viewBox="0 0 20 20"><circle cx="10" cy="10" r="6.4" fill="none" stroke="#0ea5e9" stroke-width="1.5"/><path d="M12.1 7.6 C11.7 7, 11 6.6, 10 6.6 C8.8 6.6, 8 7.3, 8 8.3 C8 10.5, 12.2 9.6, 12.2 11.8 C12.2 12.9, 11.2 13.5, 10 13.5 C9 13.5, 8.2 13.1, 7.8 12.4 M10 5.4 V6.6 M10 13.5 V14.6" fill="none" stroke="#0ea5e9" stroke-width="1.2"/></svg><div class="t" style="left:632px;top:639.38px;font-size:16px;line-height:21px;color:#0ea5e9;font-weight:400;letter-spacing:0.471px;-webkit-text-stroke:0.45px #0ea5e9">Invoice</div><div class="t" style="right:calc(1092px - 0.000px);top:639.38px;font-size:16px;line-height:21px;color:#1e293b;font-weight:400;letter-spacing:0.000px;direction:rtl;unicode-bidi:isolate">فاتورة</div><div class="t" style="left:830.4px;top:639.38px;font-size:16px;line-height:21px;color:#1e293b;font-weight:400;letter-spacing:1.143px;">INV-000109</div><div class="t" style="right:calc(689.4000000000001px - 1.215px);top:639.38px;font-size:16px;line-height:21px;color:#1e293b;font-weight:400;letter-spacing:1.215px;">5,000.00</div><div class="t" style="right:calc(433.70000000000005px - 1.215px);top:639.38px;font-size:16px;line-height:21px;color:#1e293b;font-weight:400;letter-spacing:1.215px;">5,000.00</div><div class="t" style="right:calc(128.4000000000001px - 0.216px);top:639.38px;font-size:16px;line-height:21px;color:#1e293b;font-weight:400;letter-spacing:0.216px;">7,150.00</div><div class="t" style="left:337.7px;top:683.13px;font-size:16px;line-height:21px;color:#1e293b;font-weight:400;letter-spacing:1.507px;">2025-05-25</div><div class="t" style="left:465.5px;top:683.13px;font-size:16px;line-height:21px;color:#1e293b;font-weight:400;letter-spacing:0.480px;">SYS-CRN-2</div><div class="clip" style="left:597.1px;top:676.00px;width:181.1px;height:34px"><div class="b" style="left:0;top:0;width:130.7px;height:34px;background:#f1f5f9;border-radius:8px"></div></div><svg class="b" style="left:608.7px;top:683.075px" width="20" height="20" viewBox="0 0 20 20"><circle cx="10" cy="10" r="6.4" fill="none" stroke="#0ea5e9" stroke-width="1.5"/><path d="M12.1 7.6 C11.7 7, 11 6.6, 10 6.6 C8.8 6.6, 8 7.3, 8 8.3 C8 10.5, 12.2 9.6, 12.2 11.8 C12.2 12.9, 11.2 13.5, 10 13.5 C9 13.5, 8.2 13.1, 7.8 12.4 M10 5.4 V6.6 M10 13.5 V14.6" fill="none" stroke="#0ea5e9" stroke-width="1.2"/></svg><div class="t" style="left:632px;top:683.13px;font-size:16px;line-height:21px;color:#0ea5e9;font-weight:400;letter-spacing:0.585px;-webkit-text-stroke:0.45px #0ea5e9">Credit note</div><div class="t" style="left:785.2px;top:683.13px;font-size:16px;line-height:21px;color:#1e293b;font-weight:400;letter-spacing:0.745px;">Credit note CN-...</div><div class="t" style="right:calc(571.4000000000001px - 1.336px);top:683.13px;font-size:16px;line-height:21px;color:#1e293b;font-weight:400;letter-spacing:1.336px;">50.00</div><div class="t" style="right:calc(289.5999999999999px - 1.336px);top:683.13px;font-size:16px;line-height:21px;color:#1e293b;font-weight:400;letter-spacing:1.336px;">50.00</div><div class="t" style="right:calc(128.4000000000001px - 0.302px);top:683.13px;font-size:16px;line-height:21px;color:#1e293b;font-weight:400;letter-spacing:0.302px;">7,100.00</div><div class="t" style="left:337.7px;top:726.88px;font-size:16px;line-height:21px;color:#1e293b;font-weight:400;letter-spacing:1.624px;">2025-05-30</div><div class="t" style="left:465.5px;top:726.88px;font-size:16px;line-height:21px;color:#1e293b;font-weight:400;letter-spacing:0.743px;">SYS-INV-27</div><div class="clip" style="left:597.1px;top:719.75px;width:181.1px;height:34px"><div class="b" style="left:0;top:0;width:100.0px;height:34px;background:#f1f5f9;border-radius:8px"></div></div><svg class="b" style="left:608.7px;top:726.825px" width="20" height="20" viewBox="0 0 20 20"><circle cx="10" cy="10" r="6.4" fill="none" stroke="#0ea5e9" stroke-width="1.5"/><path d="M12.1 7.6 C11.7 7, 11 6.6, 10 6.6 C8.8 6.6, 8 7.3, 8 8.3 C8 10.5, 12.2 9.6, 12.2 11.8 C12.2 12.9, 11.2 13.5, 10 13.5 C9 13.5, 8.2 13.1, 7.8 12.4 M10 5.4 V6.6 M10 13.5 V14.6" fill="none" stroke="#0ea5e9" stroke-width="1.2"/></svg><div class="t" style="left:632px;top:726.88px;font-size:16px;line-height:21px;color:#0ea5e9;font-weight:400;letter-spacing:0.471px;-webkit-text-stroke:0.45px #0ea5e9">Invoice</div><div class="t" style="left:785.2px;top:726.88px;font-size:16px;line-height:21px;color:#1e293b;font-weight:400;letter-spacing:0.667px;">Invoice INV-000...</div><div class="t" style="right:calc(689.4000000000001px - 1.214px);top:726.88px;font-size:16px;line-height:21px;color:#1e293b;font-weight:400;letter-spacing:1.214px;">5.00</div><div class="t" style="right:calc(433.70000000000005px - 1.214px);top:726.88px;font-size:16px;line-height:21px;color:#1e293b;font-weight:400;letter-spacing:1.214px;">5.00</div><div class="t" style="right:calc(128.4000000000001px - 0.214px);top:726.88px;font-size:16px;line-height:21px;color:#1e293b;font-weight:400;letter-spacing:0.214px;">7,105.00</div><div class="t" style="left:337.7px;top:770.63px;font-size:16px;line-height:21px;color:#1e293b;font-weight:400;letter-spacing:1.624px;">2025-05-30</div><div class="t" style="left:465.5px;top:770.63px;font-size:16px;line-height:21px;color:#1e293b;font-weight:400;letter-spacing:0.743px;">SYS-INV-28</div><div class="clip" style="left:597.1px;top:763.50px;width:181.1px;height:34px"><div class="b" style="left:0;top:0;width:100.0px;height:34px;background:#f1f5f9;border-radius:8px"></div></div><svg class="b" style="left:608.7px;top:770.575px" width="20" height="20" viewBox="0 0 20 20"><circle cx="10" cy="10" r="6.4" fill="none" stroke="#0ea5e9" stroke-width="1.5"/><path d="M12.1 7.6 C11.7 7, 11 6.6, 10 6.6 C8.8 6.6, 8 7.3, 8 8.3 C8 10.5, 12.2 9.6, 12.2 11.8 C12.2 12.9, 11.2 13.5, 10 13.5 C9 13.5, 8.2 13.1, 7.8 12.4 M10 5.4 V6.6 M10 13.5 V14.6" fill="none" stroke="#0ea5e9" stroke-width="1.2"/></svg><div class="t" style="left:632px;top:770.63px;font-size:16px;line-height:21px;color:#0ea5e9;font-weight:400;letter-spacing:0.471px;-webkit-text-stroke:0.45px #0ea5e9">Invoice</div><div class="t" style="right:calc(1092px - 0.000px);top:770.63px;font-size:16px;line-height:21px;color:#1e293b;font-weight:400;letter-spacing:0.000px;direction:rtl;unicode-bidi:isolate">فاتورة</div><div class="t" style="left:830.4px;top:770.63px;font-size:16px;line-height:21px;color:#1e293b;font-weight:400;letter-spacing:1.038px;">INV-000127</div><div class="t" style="right:calc(689.4000000000001px - 1.214px);top:770.63px;font-size:16px;line-height:21px;color:#1e293b;font-weight:400;letter-spacing:1.214px;">5.00</div><div class="t" style="right:calc(433.70000000000005px - 1.214px);top:770.63px;font-size:16px;line-height:21px;color:#1e293b;font-weight:400;letter-spacing:1.214px;">5.00</div><div class="t" style="right:calc(128.4000000000001px - -0.050px);top:770.63px;font-size:16px;line-height:21px;color:#1e293b;font-weight:400;letter-spacing:-0.050px;">7,110.00</div><div class="t" style="left:337.7px;top:814.38px;font-size:16px;line-height:21px;color:#1e293b;font-weight:400;letter-spacing:1.624px;">2025-05-30</div><div class="t" style="left:465.5px;top:814.38px;font-size:16px;line-height:21px;color:#1e293b;font-weight:400;letter-spacing:0.743px;">SYS-INV-26</div><div class="clip" style="left:597.1px;top:807.25px;width:181.1px;height:34px"><div class="b" style="left:0;top:0;width:100.0px;height:34px;background:#f1f5f9;border-radius:8px"></div></div><svg class="b" style="left:608.7px;top:814.325px" width="20" height="20" viewBox="0 0 20 20"><circle cx="10" cy="10" r="6.4" fill="none" stroke="#0ea5e9" stroke-width="1.5"/><path d="M12.1 7.6 C11.7 7, 11 6.6, 10 6.6 C8.8 6.6, 8 7.3, 8 8.3 C8 10.5, 12.2 9.6, 12.2 11.8 C12.2 12.9, 11.2 13.5, 10 13.5 C9 13.5, 8.2 13.1, 7.8 12.4 M10 5.4 V6.6 M10 13.5 V14.6" fill="none" stroke="#0ea5e9" stroke-width="1.2"/></svg><div class="t" style="left:632px;top:814.38px;font-size:16px;line-height:21px;color:#0ea5e9;font-weight:400;letter-spacing:0.471px;-webkit-text-stroke:0.45px #0ea5e9">Invoice</div><div class="t" style="left:785.2px;top:814.38px;font-size:16px;line-height:21px;color:#1e293b;font-weight:400;letter-spacing:0.667px;">Invoice INV-000...</div><div class="t" style="right:calc(689.4000000000001px - 0.633px);top:814.38px;font-size:16px;line-height:21px;color:#1e293b;font-weight:400;letter-spacing:0.633px;">57.50</div><div class="t" style="right:calc(433.70000000000005px - 0.633px);top:814.38px;font-size:16px;line-height:21px;color:#1e293b;font-weight:400;letter-spacing:0.633px;">57.50</div><div class="t" style="right:calc(128.4000000000001px - -0.197px);top:814.38px;font-size:16px;line-height:21px;color:#1e293b;font-weight:400;letter-spacing:-0.197px;">7,167.50</div>
</body></html>
